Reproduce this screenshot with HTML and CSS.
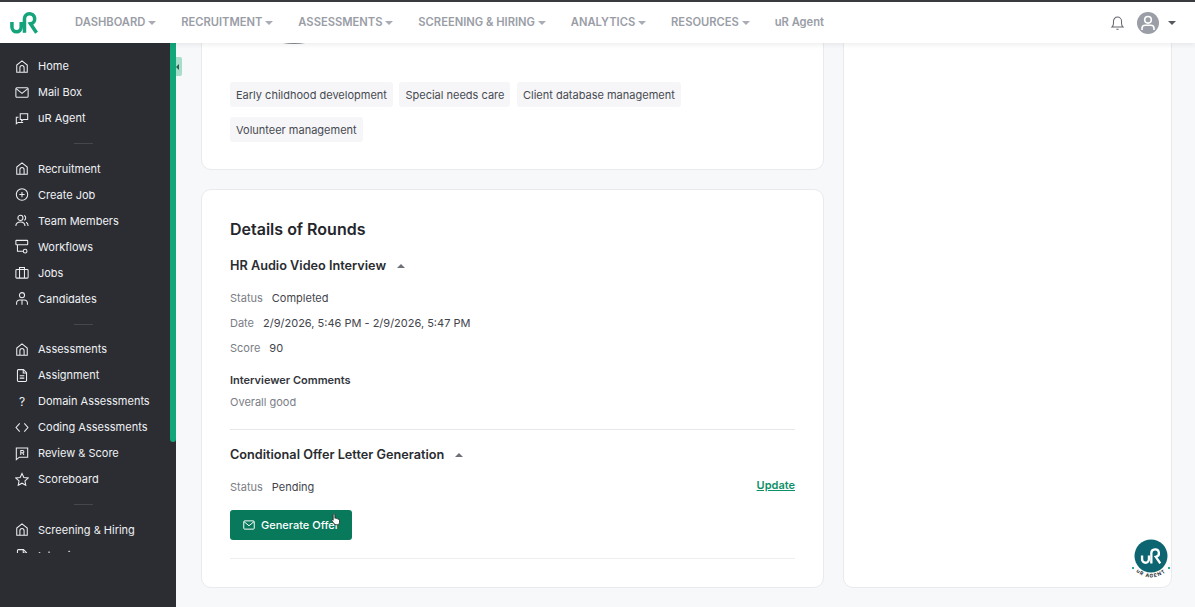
FILE: index.html
```html
<!DOCTYPE html>
<html lang="en">
<head>
<meta charset="utf-8">
<title>uR Dashboard</title>
<link rel="stylesheet" href="styles.css">
</head>
<body>
<svg class="defs" width="0" height="0" aria-hidden="true">
  <defs>
    <symbol id="i-home" viewBox="0 0 16 16"><path d="M2 14.500V6.400L8 1.500l6 4.900v8.100zM5.600 14.500V9.300a2.400 2.400 0 0 1 4.800 0v5.200" /></symbol>
    <symbol id="i-mail" viewBox="0 0 16 16"><rect x="1" y="2.500" width="14" height="11" rx="1.200"/><path d="M1.300 3.500L8 9l6.700-5.500"/></symbol>
    <symbol id="i-chat" viewBox="0 0 16 16"><path d="M6 2.500h8.500v6.700H9.400L7.600 10.800V9.200H6z"/><path d="M4 6.500H1.500v7.500l2.200-1.500h5V12"/></symbol>
    <symbol id="i-plus" viewBox="0 0 16 16"><circle cx="8" cy="8" r="6.500"/><path d="M8 5v6M5 8h6"/></symbol>
    <symbol id="i-team" viewBox="0 0 16 16"><circle cx="6.200" cy="5" r="2.900"/><path d="M1 14.200c0-3 2.300-4.600 5.200-4.600s5.200 1.600 5.200 4.600"/><path d="M10.400 2.300a2.900 2.900 0 0 1 0 5.400M12.600 10c1.500.6 2.400 2.200 2.400 4.200"/></symbol>
    <symbol id="i-flow" viewBox="0 0 16 16"><rect x="1" y="1" width="13.500" height="5" rx=".6"/><path d="M2.800 6.200v7.300h6.400"/><circle cx="11.600" cy="13.300" r="2.100"/></symbol>
    <symbol id="i-jobs" viewBox="0 0 16 16"><rect x="1" y="4.600" width="14" height="9.800" rx="1"/><path d="M5.200 14.400V2.200h5.600v12.200"/></symbol>
    <symbol id="i-person" viewBox="0 0 16 16"><circle cx="8" cy="4.200" r="2.900"/><path d="M1.800 15v-1.400c0-2.200 1.700-3.800 3.800-3.800h4.800c2.100 0 3.800 1.600 3.800 3.800V15M8 10v5"/></symbol>
    <symbol id="i-doc" viewBox="0 0 16 16"><path d="M2.800 2.300a1 1 0 0 1 1-1h5.900l3.500 3.500v9a1 1 0 0 1-1 1H3.800a1 1 0 0 1-1-1z"/><path d="M9.400 1.500v3.700h3.700M5.400 8.200h5.200M5.400 11h5.200"/></symbol>
    <symbol id="i-code" viewBox="0 0 16 16"><path d="M5.400 3.200L1.200 8l4.200 4.800M10.600 3.200l4.200 4.800-4.200 4.800"/></symbol>
    <symbol id="i-review" viewBox="0 0 16 16"><path d="M1.500 1.800h13v10.400H5l-3.500 2.800z"/><path d="M6.600 9.600V4.600h2.200a1.300 1.300 0 0 1 0 2.600H6.600M8.700 7.200l1.500 2.400"/></symbol>
    <symbol id="i-star" viewBox="0 0 16 16"><path d="M8 1.200l2.100 4.500 4.900.6-3.600 3.400.9 4.900L8 12.200l-4.300 2.400.9-4.900L1 6.300l4.900-.6z"/></symbol>
    <symbol id="i-logo" viewBox="0 0 32 28"><path d="M3 14v5.500a5 5 0 0 0 10 0V14"/><path d="M16.500 25.500V10.500a5.500 5.500 0 1 1 6.500 5.500L29.500 25.500"/></symbol>
  </defs>
</svg>

<header class="topbar">
  <svg class="logo" viewBox="0 0 32 28"><use href="#i-logo"/></svg>
  <nav class="topnav">
    <a class="topnav-item">DASHBOARD<span class="caret"></span></a>
    <a class="topnav-item">RECRUITMENT<span class="caret"></span></a>
    <a class="topnav-item">ASSESSMENTS<span class="caret"></span></a>
    <a class="topnav-item">SCREENING &amp; HIRING<span class="caret"></span></a>
    <a class="topnav-item">ANALYTICS<span class="caret"></span></a>
    <a class="topnav-item">RESOURCES<span class="caret"></span></a>
    <a class="topnav-item">uR Agent</a>
  </nav>
  <div class="top-actions">
    <svg class="bell" viewBox="0 0 16 16"><path d="M2 12.300c1-1 1.700-2 1.700-3.800V6a4.300 4.300 0 0 1 8.600 0v2.500c0 1.800.7 2.800 1.700 3.800zM6.800 14.700h2.400"/></svg>
    <span class="avatar">
      <svg viewBox="0 0 22 22"><circle cx="11" cy="7.800" r="3.300"/><path d="M5 18v-1.500c0-2 1.400-3.200 3.200-3.200h5.600c1.800 0 3.200 1.200 3.200 3.200V18"/></svg>
    </span>
    <span class="caret caret-dark"></span>
  </div>
</header>

<div class="shell">
  <aside class="sidebar">
    <div class="side-scroll">
      <ul class="side-group">
        <li class="side-item"><svg class="side-icon"><use href="#i-home"/></svg>Home</li>
        <li class="side-item"><svg class="side-icon"><use href="#i-mail"/></svg>Mail Box</li>
        <li class="side-item"><svg class="side-icon"><use href="#i-chat"/></svg>uR Agent</li>
      </ul>
      <div class="side-divider"></div>
      <ul class="side-group">
        <li class="side-item"><svg class="side-icon"><use href="#i-home"/></svg>Recruitment</li>
        <li class="side-item"><svg class="side-icon"><use href="#i-plus"/></svg>Create Job</li>
        <li class="side-item"><svg class="side-icon"><use href="#i-team"/></svg>Team Members</li>
        <li class="side-item"><svg class="side-icon"><use href="#i-flow"/></svg>Workflows</li>
        <li class="side-item"><svg class="side-icon"><use href="#i-jobs"/></svg>Jobs</li>
        <li class="side-item"><svg class="side-icon"><use href="#i-person"/></svg>Candidates</li>
      </ul>
      <div class="side-divider"></div>
      <ul class="side-group">
        <li class="side-item"><svg class="side-icon"><use href="#i-home"/></svg>Assessments</li>
        <li class="side-item"><svg class="side-icon"><use href="#i-doc"/></svg>Assignment</li>
        <li class="side-item"><span class="side-glyph">?</span>Domain Assessments</li>
        <li class="side-item"><svg class="side-icon"><use href="#i-code"/></svg>Coding Assessments</li>
        <li class="side-item"><svg class="side-icon"><use href="#i-review"/></svg>Review &amp; Score</li>
        <li class="side-item"><svg class="side-icon"><use href="#i-star"/></svg>Scoreboard</li>
      </ul>
      <div class="side-divider"></div>
      <ul class="side-group">
        <li class="side-item"><svg class="side-icon"><use href="#i-home"/></svg>Screening &amp; Hiring</li>
        <li class="side-item"><svg class="side-icon"><use href="#i-doc"/></svg>Interviews</li>
      </ul>
    </div>
    <div class="side-thumb"></div>
  </aside>

  <main class="main">
    <span class="collapse"><span class="collapse-arrow"></span></span>
    <div class="columns">
      <div class="col-left">
        <section class="card card-skills">
          <div class="avatar-arc"></div>
          <div class="tags">
            <span class="tag">Early childhood development</span>
            <span class="tag">Special needs care</span>
            <span class="tag">Client database management</span>
            <span class="tag">Volunteer management</span>
          </div>
        </section>

        <section class="card card-rounds">
          <h2 class="card-title">Details of Rounds</h2>

          <div class="round">
            <h3 class="round-title">HR Audio Video Interview<span class="caret-up"></span></h3>
            <p class="kv"><span class="k">Status</span><span class="v">Completed</span></p>
            <p class="kv"><span class="k">Date</span><span class="v">2/9/2026, 5:46 PM - 2/9/2026, 5:47 PM</span></p>
            <p class="kv"><span class="k">Score</span><span class="v">90</span></p>
            <h4 class="comment-title">Interviewer Comments</h4>
            <p class="comment">Overall good</p>
          </div>

          <div class="round round-second">
            <h3 class="round-title">Conditional Offer Letter Generation<span class="caret-up"></span></h3>
            <div class="status-row">
              <p class="kv"><span class="k">Status</span><span class="v">Pending</span></p>
              <a class="update">Update</a>
            </div>
            <div class="btn-wrap">
              <button class="btn-offer" type="button">
                <svg viewBox="0 0 16 16"><use href="#i-mail"/></svg>Generate Offer
              </button>
              <svg class="cursor" viewBox="0 0 12 16"><path d="M3.500 1.200c.8 0 1.200.5 1.200 1.300v4l.9-.2c.5 0 .8.200 1 .5.600-.2 1.100 0 1.300.4.600-.1 1.100.2 1.200.7.700 0 1.100.4 1.100 1.100v2.500c0 1.400-1 2.800-2.600 2.800H6c-1 0-1.800-.5-2.400-1.400L1 9.500c-.4-.6 0-1.200.6-1.200.4 0 .8.200 1 .6V2.500c0-.8.200-1.300.9-1.300z"/></svg>
            </div>
          </div>
        </section>
      </div>

      <aside class="col-right">
        <section class="card card-side"></section>
      </aside>
    </div>

    <div class="agent-badge">
      <svg class="agent-svg" viewBox="0 0 48 48">
        <circle class="agent-disc" cx="24" cy="24" r="16.500"/>
        <svg x="13" y="13.500" width="22" height="20" viewBox="0 0 32 28"><use class="agent-mark" href="#i-logo"/></svg>
        <path id="agent-arc" class="agent-arc" d="M2.500 24a21.500 21.500 0 0 0 43 0"/>
        <rect class="agent-dot" x="5" y="35" width="2" height="2"/>
        <rect class="agent-dot" x="41" y="35" width="2" height="2"/>
        <text class="agent-label"><textPath href="#agent-arc" startOffset="50%" text-anchor="middle">uR AGENT</textPath></text>
      </svg>
    </div>
  </main>
</div>
</body>
</html>
```

FILE: styles.css
```css
* { box-sizing: border-box; }
html, body { height: 100%; }
body {
  margin: 0;
  height: 607px;
  overflow: hidden;
  font-family: Inter, "Liberation Sans", sans-serif;
  font-size: 11px;
  color: #3c3f46;
  background: #f7f8fa;
  display: flex;
  flex-direction: column;
}
.defs { position: absolute; }
ul { list-style: none; margin: 0; padding: 0; }
p, h2, h3, h4 { margin: 0; }

/* top bar */
.topbar {
  flex: none;
  height: 43px;
  background: #fff;
  border-top: 2px solid #3a3b3f;
  display: flex;
  align-items: center;
  padding: 0 19px 0 9px;
  box-shadow: 0 2px 5px rgba(30, 35, 50, .08);
  position: relative;
  z-index: 3;
}
.logo {
  width: 30px;
  height: 26px;
  fill: none;
  stroke: #14a37a;
  stroke-width: 3.800;
  margin-top: -1px;
}
.topnav {
  display: flex;
  align-items: center;
  gap: 24.850px;
  margin: -1px 0 0 36px;
  flex: 1;
}
.topnav-item {
  display: flex;
  align-items: center;
  gap: 3px;
  font-size: 11.200px;
  font-weight: 600;
  color: #9a9da6;
  white-space: nowrap;
}
.caret {
  width: 0;
  height: 0;
  border-left: 4.500px solid transparent;
  border-right: 4.500px solid transparent;
  border-top: 4.500px solid #a9acb4;
  margin-top: 1px;
}
.caret-dark { border-left-width: 4px; border-right-width: 4px; border-top: 4px solid #55585f; }
.top-actions { display: flex; align-items: center; }
.bell {
  width: 15px;
  height: 16px;
  fill: none;
  stroke: #64676e;
  stroke-width: 1.100;
  margin-right: 12px;
}
.avatar {
  width: 22px;
  height: 22px;
  border-radius: 50%;
  background: #9b9ea7;
  display: block;
  margin-right: 9px;
}
.avatar svg {
  display: block;
  width: 22px;
  height: 22px;
  fill: none;
  stroke: #fff;
  stroke-width: 1.600;
}

/* shell */
.shell {
  flex: 1;
  min-height: 0;
  display: flex;
}

/* sidebar */
.sidebar {
  flex: none;
  width: 176px;
  background: #2b2d33;
  position: relative;
}
.side-scroll {
  height: 510px;
  overflow: hidden;
  padding-top: 10px;
}
.side-thumb {
  position: absolute;
  top: 0;
  right: 0;
  width: 6px;
  height: 399px;
  background: #12a67b;
  border-radius: 0 0 3px 3px;
}
.side-item {
  height: 26px;
  display: flex;
  align-items: center;
  padding-left: 15px;
  color: #f0f1f3;
  font-size: 11px;
  white-space: nowrap;
}
.side-icon {
  width: 14px;
  height: 15px;
  fill: none;
  stroke: #eceef0;
  stroke-width: 1.200;
  margin-right: 9px;
  flex: none;
}
.side-glyph {
  width: 14px;
  margin-right: 9px;
  text-align: center;
  color: #eceef0;
  font-size: 12px;
  flex: none;
}
.side-divider {
  width: 19px;
  height: 1px;
  background: #45474d;
  margin: 12px 0 11.500px 74px;
}

/* main */
.main {
  flex: 1;
  min-width: 0;
  position: relative;
  padding: 0 23px 0 25px;
  overflow: hidden;
}
.collapse {
  position: absolute;
  top: 14px;
  left: -4px;
  width: 10px;
  height: 19px;
  background: #a8dccb;
  border-radius: 2px;
  display: flex;
  align-items: center;
  justify-content: center;
  z-index: 2;
}
.collapse-arrow {
  width: 0;
  height: 0;
  border-top: 3px solid transparent;
  border-bottom: 3px solid transparent;
  border-right: 3px solid #25614f;
}
.columns {
  display: flex;
  gap: 19px;
  align-items: stretch;
  margin-top: -41px;
  height: 586px;
}
.col-left {
  width: 623px;
  flex: none;
  display: flex;
  flex-direction: column;
  gap: 19px;
}
.col-right {
  flex: 1;
  min-width: 0;
  display: flex;
}
.card {
  background: #fff;
  border: 1px solid #e9eaee;
  border-radius: 10px;
}
.card-side { flex: 1; }
.card-skills {
  height: 168px;
  flex: none;
  padding: 0 28px;
  position: relative;
}
.avatar-arc {
  position: absolute;
  top: 29px;
  left: 72px;
  width: 40px;
  height: 12px;
  border-radius: 50%;
  background: #85878e;
}
.tags {
  display: flex;
  flex-wrap: wrap;
  gap: 10px 6.500px;
  padding-top: 79px;
}
.tag {
  height: 25px;
  display: flex;
  align-items: center;
  padding: 0 6px;
  background: #f6f6f8;
  border-radius: 3px;
  color: #474a52;
  font-size: 11px;
  white-space: nowrap;
}

/* rounds */
.card-rounds {
  flex: 1;
  padding: 29px 28px 0;
}
.card-title {
  font-size: 16px;
  font-weight: 600;
  color: #24262b;
  line-height: 20px;
}
.round-title {
  display: flex;
  align-items: center;
  font-size: 12.700px;
  font-weight: 600;
  color: #2a2c31;
  line-height: 18px;
}
.caret-up {
  width: 0;
  height: 0;
  border-left: 4px solid transparent;
  border-right: 4px solid transparent;
  border-bottom: 4px solid #6d7077;
  margin-left: 11px;
}
.round { padding-top: 18px; }
.round .round-title { margin-bottom: 14px; }
.kv {
  display: flex;
  gap: 9px;
  line-height: 18px;
  margin-bottom: 7px;
  font-size: 11px;
}
.k { color: #7a7d85; }
.v { color: #43454c; }
.comment-title {
  font-size: 11px;
  font-weight: 600;
  color: #33353b;
  line-height: 16px;
  margin-top: 15px;
}
.comment {
  font-size: 11px;
  color: #7a7d85;
  line-height: 18px;
  margin-top: 5px;
}
.round-second {
  margin-top: 18px;
  border-top: 1px solid #e6e7ea;
  border-bottom: 1px solid #eceef0;
  padding-top: 16px;
  padding-bottom: 18px;
}
.status-row {
  display: flex;
  justify-content: space-between;
  align-items: flex-start;
}
.update {
  color: #0f8f68;
  font-size: 11px;
  font-weight: 600;
  text-decoration: underline;
  line-height: 16px;
  margin-top: -1px;
}
.btn-wrap {
  position: relative;
  width: 121.500px;
  margin-top: 7px;
}
.btn-offer {
  display: flex;
  align-items: center;
  gap: 6px;
  width: 100%;
  height: 30px;
  padding: 0 0 0 13px;
  border: 0;
  border-radius: 3px;
  background: #087a5b;
  color: #fff;
  font: 500 11px Inter, "Liberation Sans", sans-serif;
  white-space: nowrap;
  overflow: hidden;
}
.btn-offer svg {
  width: 12px;
  height: 12px;
  fill: none;
  stroke: #fff;
  stroke-width: 1.300;
  flex: none;
}
.cursor {
  position: absolute;
  left: 101px;
  top: 2px;
  width: 10px;
  height: 15px;
  fill: #fff;
  stroke: #222;
  stroke-width: 1;
}

/* floating badge */
.agent-badge {
  position: absolute;
  left: 951px;
  top: 489px;
  width: 48px;
  height: 48px;
}
.agent-svg { display: block; width: 48px; height: 48px; overflow: visible; }
.agent-disc { fill: #0c6570; }
.agent-mark { fill: none; stroke: #fff; stroke-width: 3.400; }
.agent-arc { fill: none; stroke: none; }
.agent-dot { fill: #2ea893; }
.agent-label {
  font-size: 5px;
  font-weight: 700;
  fill: #20262b;
  letter-spacing: 1px;
}
```
